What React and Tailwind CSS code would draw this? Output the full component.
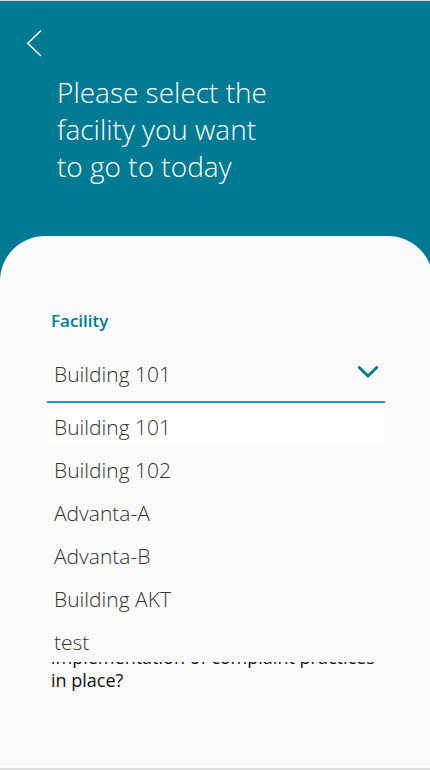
import { useState } from "react";

const facilities = [
  "Building 101",
  "Building 102",
  "Advanta-A",
  "Advanta-B",
  "Building AKT",
  "test",
];

function BackButton() {
  return (
    <button type="button" aria-label="Back" className="block h-7 w-4">
      <svg viewBox="0 0 16 28" className="h-7 w-4" fill="none" stroke="white" strokeWidth="1.5">
        <path d="M15 1.5 L1.8 14.2 L15 27" />
      </svg>
    </button>
  );
}

function FacilityPicker() {
  const [value, setValue] = useState(facilities[0]);

  return (
    <div>
      <label htmlFor="facility" className="block pl-1 text-[17px] leading-6 font-semibold text-[#007a92]">
        Facility
      </label>
      <div className="relative mt-3 border-b-2 border-[#2b9bb0]">
        <select
          id="facility"
          value={value}
          onChange={(e) => setValue(e.target.value)}
          className="block h-14 w-full appearance-none bg-transparent pt-1 pr-10 pl-[7px] text-[21px] font-light text-[#333] outline-none"
        >
          {facilities.map((name) => (
            <option key={name}>{name}</option>
          ))}
        </select>
        <svg
          viewBox="0 0 22 14"
          className="pointer-events-none absolute top-5 right-[6px] h-[14px] w-[22px]"
          fill="none"
          stroke="#007a92"
          strokeWidth="2.8"
        >
          <path d="M1.5 1.8 L11 11 L20.5 1.8" />
        </svg>
        <ul className="absolute inset-x-0 top-[58px] grid h-[259px] grid-rows-6 bg-[#fafafa]">
          {facilities.map((name) => (
            <li key={name} className={name === value ? "bg-white" : ""}>
              <button
                type="button"
                onClick={() => setValue(name)}
                className="block h-full w-full pt-1 pl-[7px] text-left text-[21px] leading-9 font-light text-[#333]"
              >
                {name}
              </button>
            </li>
          ))}
        </ul>
      </div>
    </div>
  );
}

export default function App() {
  return (
    <div className="flex min-h-screen flex-col overflow-hidden border-t border-b-2 border-t-[#d5dcde] border-b-[#dedede] bg-white font-['Open_Sans','Noto_Sans',sans-serif]">
      <div className="flex flex-1 flex-col bg-[#007a92]">
        <header className="px-[26px] pt-7 pb-[51px] text-white">
          <BackButton />
          <h1 className="mt-[17px] pl-[31px] text-[28px] leading-[37px] font-light">
            Please select the
            <br />
            facility you want
            <br />
            to go to today
          </h1>
        </header>
        <main className="-mr-[3px] flex-1 rounded-t-[45px] bg-[#fafafa] pt-[73px] pr-12 pb-[60px] pl-[47px]">
          <FacilityPicker />
          <p className="mt-[243px] pl-1 text-[18px] leading-[23px] text-[#111]">
            implementation of complaint practices in place?
          </p>
        </main>
      </div>
      <footer className="h-[5px] border-t border-[#eef4f4] bg-white" />
    </div>
  );
}
